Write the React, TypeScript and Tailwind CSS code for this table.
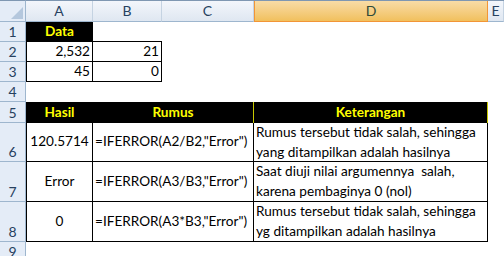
import React from "react";

// Excel 2007 look: column header strip, row header strip, gridlines turned off
const COLS = ["A", "B", "C", "D", "E"];

function ColHeader({ label, selected }: { label: string; selected?: boolean }) {
    if (selected) {
        return (
            <div className="flex items-center justify-center border border-t-0 border-[#f29536] bg-gradient-to-b from-[#f9dca6] to-[#f1c05c] text-[#2f4a3a]">
                {label}
            </div>
        );
    }
    return (
        <div className="flex items-center justify-center border-r border-b border-r-[#c5d3e2] border-b-[#9eb6ce] bg-gradient-to-b from-[#f3f6fb] to-[#dfe7f1] text-[#27415f]">
            {label}
        </div>
    );
}

function RowHeader({ n }: { n: number }) {
    return (
        <div className="flex items-end justify-center border-r border-b border-[#9eb6ce] bg-[#e4ecf7] text-[14px] leading-[19px] text-[#27415f]">
            {n}
        </div>
    );
}

export default function App() {
    return (
        <div className="grid h-[256px] w-[504px] grid-cols-[26px_67px_69px_92px_234px_1fr] grid-rows-[22px_20px_20px_20px_20px_21px_39px_40px_40px_1fr] overflow-hidden whitespace-nowrap bg-white font-[Lato,sans-serif] text-[13.6px] leading-[19.5px] text-black">
            {/* Corner */}
            <div className="relative border-t border-r border-b border-t-[#7f97b2] border-r-[#9eb6ce] border-b-[#9eb6ce] bg-[#e4ecf7]">
                <svg className="absolute right-[1px] bottom-[2px]" width="13" height="12" viewBox="0 0 13 12">
                    <polygon points="12,0 12,12 0,12" fill="#b4c7dd" />
                </svg>
            </div>
            {COLS.map((c) => (
                <div key={c} className="grid border-t border-[#7f97b2] text-[14px]">
                    <ColHeader label={c} selected={c === "D"} />
                </div>
            ))}

            {/* Row 1 */}
            <RowHeader n={1} />
            <div className="flex items-center justify-center bg-black font-bold text-[#ffff00]">Data</div>
            <div className="border-b border-black" />
            <div />
            <div />
            <div />

            {/* Row 2 */}
            <RowHeader n={2} />
            <div className="flex items-center justify-end border-x border-b border-black pr-[2px]">2,532</div>
            <div className="flex items-center justify-end border-r border-b border-black pr-[2px]">21</div>
            <div />
            <div />
            <div />

            {/* Row 3 */}
            <RowHeader n={3} />
            <div className="flex items-center justify-end border-x border-b border-black pr-[2px]">45</div>
            <div className="flex items-center justify-end border-r border-b border-black pr-[2px]">0</div>
            <div />
            <div />
            <div />

            {/* Row 4 */}
            <RowHeader n={4} />
            <div />
            <div />
            <div />
            <div />
            <div />

            {/* Row 5 - table header */}
            <RowHeader n={5} />
            <div className="flex items-center justify-center bg-black font-bold text-[#ffff00]">Hasil</div>
            <div className="col-span-2 flex items-center justify-center border-r border-[#c8c800] bg-black font-bold text-[#ffff00]">Rumus</div>
            <div className="flex items-center justify-center border-r border-[#c8c800] bg-black font-bold text-[#ffff00]">Keterangan</div>
            <div />

            {/* Row 6 */}
            <RowHeader n={6} />
            <div className="flex items-center justify-center border-x border-b border-black">120.5714</div>
            <div className="col-span-2 flex items-center border-r border-b border-black pl-[2px]">=IFERROR(A2/B2,"Error")</div>
            <div className="border-r border-b border-black pl-[2px]">
                Rumus tersebut tidak salah, sehingga
                <br />
                yang ditampilkan adalah hasilnya
            </div>
            <div />

            {/* Row 7 */}
            <RowHeader n={7} />
            <div className="flex items-center justify-center border-x border-b border-black">Error</div>
            <div className="col-span-2 flex items-center border-r border-b border-black pl-[2px]">=IFERROR(A3/B3,"Error")</div>
            <div className="whitespace-pre border-r border-b border-black pl-[2px]">
                {"Saat diuji nilai argumennya  salah,"}
                <br />
                karena pembaginya 0 (nol)
            </div>
            <div />

            {/* Row 8 */}
            <RowHeader n={8} />
            <div className="flex items-center justify-center border-x border-b border-black">0</div>
            <div className="col-span-2 flex items-center border-r border-b border-black pl-[2px]">=IFERROR(A3*B3,"Error")</div>
            <div className="border-r border-b border-black pl-[2px]">
                Rumus tersebut tidak salah, sehingga
                <br />
                yg ditampilkan adalah hasilnya
            </div>
            <div />

            {/* Row 9 */}
            <RowHeader n={9} />
            <div />
            <div />
            <div />
            <div />
            <div />
        </div>
    );
}
